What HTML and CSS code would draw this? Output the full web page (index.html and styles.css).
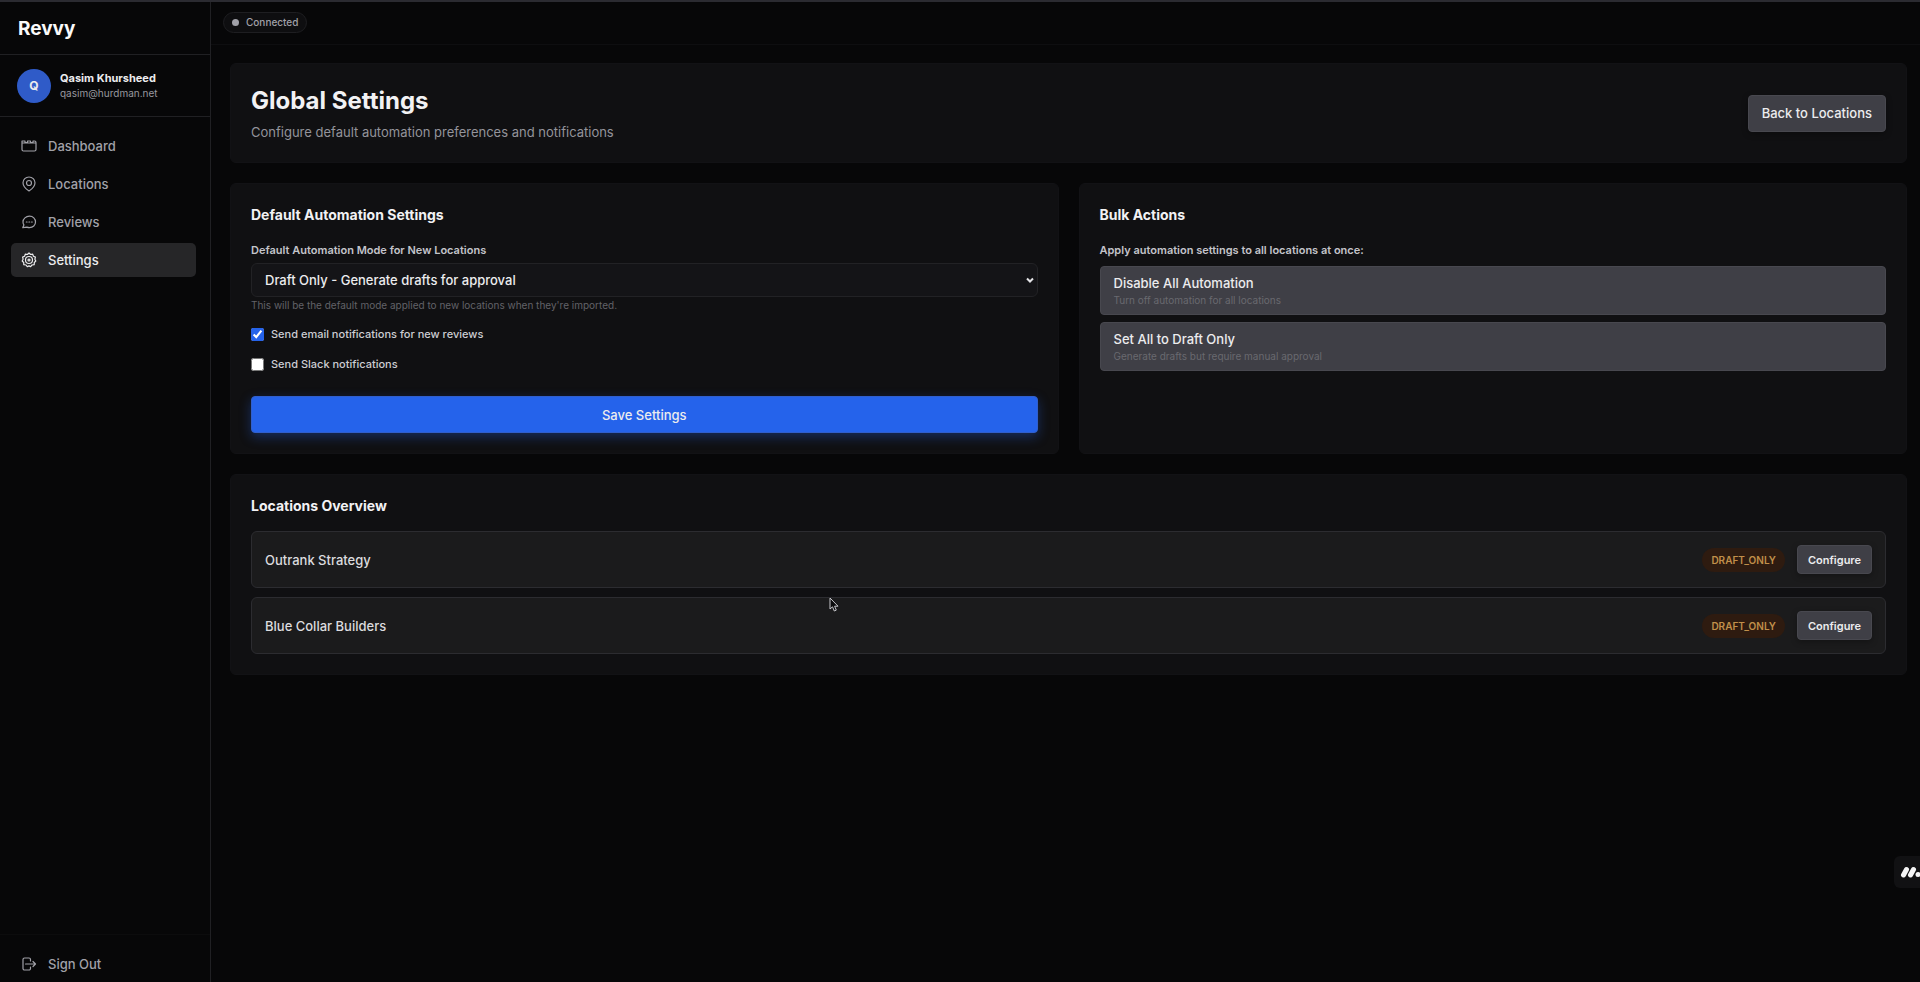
FILE: index.html
```html
<!DOCTYPE html>
<html lang="en">
<head>
<meta charset="utf-8">
<title>Revvy - Global Settings</title>
<link rel="stylesheet" href="styles.css">
</head>
<body>
<div class="app">
  <aside class="sidebar">
    <div class="brand">Revvy</div>
    <div class="user">
      <div class="avatar">Q</div>
      <div class="user-text">
        <div class="user-name">Qasim Khursheed</div>
        <div class="user-mail">qasim@hurdman.net</div>
      </div>
    </div>
    <nav class="nav">
      <a class="nav-item" href="#">
        <svg class="icon" viewBox="0 0 16 16"><path d="M1 3h3v1.500h2.500V3h3v1.500H12V3h1.500A1.500 1.500 0 0 1 15 4.500v7a1.500 1.500 0 0 1-1.500 1.500h-11A1.500 1.500 0 0 1 1 11.500zM1 5h14"/></svg>
        Dashboard</a>
      <a class="nav-item" href="#">
        <svg class="icon" viewBox="0 0 16 16"><path d="M8 15s-6-4-6-8.300a6 5.700 0 0 1 12 0C14 11 8 15 8 15z"/><circle cx="8" cy="7" r="2.500"/></svg>
        Locations</a>
      <a class="nav-item" href="#">
        <svg class="icon" viewBox="0 0 16 16"><path d="M8.500 2.200c3.500 0 6 2.500 6 5.700s-2.500 5.700-6 5.700c-1 0-1.900-.2-2.700-.5L1.800 13.600l1.100-2.700C2.300 10 2 9 2 7.900c0-3.200 2.900-5.700 6.500-5.700z"/><path d="M5.300 8h.8M7.900 8h.8M10.500 8h.8"/></svg>
        Reviews</a>
      <a class="nav-item active" href="#">
        <svg class="icon" viewBox="0 0 16 16"><path d="M8 1l1.600 1.500 2.100-.4.700 2.100 2 .9-.5 2.100.9 1.800-1.500 1.500-.1 2.200-2.200.3L9.600 14.700 8 13.900l-1.700.8L5 13l-2.200-.3-.1-2.200L1.200 9l.9-1.800-.5-2.100 2-.9.700-2.100 2.100.4z"/><circle cx="8" cy="8" r="3.500"/><circle cx="8" cy="8" r="1"/></svg>
        Settings</a>
    </nav>
    <div class="sidebar-foot">
      <button class="nav-item" type="button">
        <svg class="icon" viewBox="0 0 16 16"><path d="M9.500 5V3.500A1.500 1.500 0 0 0 8 2H3.500A1.500 1.500 0 0 0 2 3.500v9A1.500 1.500 0 0 0 3.500 14H8a1.500 1.500 0 0 0 1.500-1.500V11M4.500 8h10M12 5.500L14.500 8 12 10.500"/></svg>
        Sign Out</button>
    </div>
  </aside>
  <div class="content">
    <header class="topbar"><span class="status"><i class="dot"></i>Connected</span></header>
    <main class="main">
      <section class="card hero">
        <div>
          <h1 class="title">Global Settings</h1>
          <p class="subtitle">Configure default automation preferences and notifications</p>
        </div>
        <button class="btn" type="button">Back to Locations</button>
      </section>
      <div class="columns">
        <form class="card">
          <h2 class="heading">Default Automation Settings</h2>
          <label class="label" for="mode">Default Automation Mode for New Locations</label>
          <div class="select-wrap">
            <select class="select" id="mode"><option>Draft Only - Generate drafts for approval</option></select>
            <svg class="chevron" viewBox="0 0 8 6"><path d="M1 1.500l3 3 3-3"/></svg>
          </div>
          <p class="hint">This will be the default mode applied to new locations when they're imported.</p>
          <label class="check"><input type="checkbox" checked>Send email notifications for new reviews</label>
          <label class="check"><input type="checkbox">Send Slack notifications</label>
          <button class="btn primary" type="button">Save Settings</button>
        </form>
        <section class="card">
          <h2 class="heading">Bulk Actions</h2>
          <p class="label">Apply automation settings to all locations at once:</p>
          <div class="bulk-list">
            <button class="bulk" type="button"><span class="bulk-title">Disable All Automation</span><span class="bulk-sub">Turn off automation for all locations</span></button>
            <button class="bulk" type="button"><span class="bulk-title">Set All to Draft Only</span><span class="bulk-sub">Generate drafts but require manual approval</span></button>
          </div>
        </section>
      </div>
      <section class="card">
        <h2 class="heading">Locations Overview</h2>
        <div class="rows">
          <div class="row"><span class="row-name">Outrank Strategy</span><span class="badge">DRAFT_ONLY</span><button class="btn small" type="button">Configure</button></div>
          <div class="row"><span class="row-name">Blue Collar Builders</span><span class="badge">DRAFT_ONLY</span><button class="btn small" type="button">Configure</button></div>
        </div>
      </section>
    </main>
  </div>
</div>
<div class="widget"><svg class="widget-logo" viewBox="0 0 20 12"><path d="M3.500 9L6.500 3.500M10.500 9L13.500 3.500"/><circle cx="18" cy="8.500" r="2.500"/></svg></div>
<svg class="cursor" viewBox="0 0 10 15"><path d="M1 1v11l2.500-2.200L5.300 14l2-.9-1.700-3.900H9z"/></svg>
</body>
</html>
```
FILE: styles.css
```css
* { box-sizing: border-box; }
body {
  margin: 0;
  background: #070708;
  color: #ececee;
  font-family: Inter, "Liberation Sans", sans-serif;
  font-size: 13px;
  line-height: 20px;
}
h1, h2, p { margin: 0; }
button, select { font: inherit; color: inherit; }
.app {
  display: flex;
  min-height: 100vh;
  border-top: 2px solid #2b2b31;
}
.sidebar {
  display: flex;
  flex-direction: column;
  width: 211px;
  flex: none;
  border-right: 1px solid #202023;
}
.brand {
  padding: 13px 18px 11px;
  border-bottom: 1px solid #202023;
  font-size: 19px;
  font-weight: 700;
  line-height: 28px;
  color: #fafafa;
}
.user {
  display: flex;
  align-items: center;
  gap: 9px;
  height: 62px;
  padding: 0 17px;
  border-bottom: 1px solid #202023;
}
.avatar {
  width: 34px;
  height: 34px;
  border-radius: 50%;
  background: #2f5bc8;
  font-size: 12px;
  font-weight: 700;
  line-height: 34px;
  text-align: center;
}
.user-name { font-size: 11px; font-weight: 700; line-height: 15px; }
.user-mail { font-size: 10px; line-height: 14px; color: #98989f; }
.nav {
  display: flex;
  flex-direction: column;
  gap: 4px;
  flex: 1;
  padding: 12px 14px 12px 11px;
}
.nav-item {
  display: flex;
  align-items: center;
  gap: 11px;
  width: 100%;
  height: 34px;
  padding: 0 10px;
  border: 0;
  border-radius: 5px;
  background: none;
  color: #a1a1a8;
  font-weight: 500;
  text-decoration: none;
}
.active { background: #262628; color: #ececee; }
.icon {
  width: 16px;
  height: 16px;
  fill: none;
  stroke: currentColor;
  stroke-width: 1.2;
  stroke-linejoin: round;
  stroke-linecap: round;
}
.sidebar-foot {
  padding: 12px 14px 1px 11px;
  border-top: 1px solid #0c0c0d;
}
.content { flex: 1; min-width: 0; }
.topbar {
  display: flex;
  align-items: center;
  height: 43px;
  padding: 0 12px 2px;
  border-bottom: 1px solid #0e0e10;
}
.status {
  display: flex;
  align-items: center;
  gap: 7px;
  height: 21px;
  padding: 0 8px;
  border: 1px solid #1e1e21;
  border-radius: 11px;
  background: #0e0e10;
  font-size: 10px;
  font-weight: 500;
  color: #a1a1a8;
}
.dot { width: 7px; height: 7px; border-radius: 50%; background: #a1a1a8; }
.main {
  display: flex;
  flex-direction: column;
  gap: 20px;
  padding: 18px 13px 18px 19px;
}
.card {
  padding: 20px;
  border: 1px solid #121215;
  border-radius: 6px;
  background: #101012;
}
.hero {
  display: flex;
  align-items: center;
  justify-content: space-between;
}
.title { font-size: 24px; font-weight: 700; line-height: 34px; color: #f2f2f4; }
.subtitle { margin-top: 4px; color: #94949b; }
.btn {
  height: 37px;
  padding: 0 13px;
  border: 1px solid #48484f;
  border-radius: 4px;
  background: #3f3f46;
  box-shadow: 0 2px 6px #0000004d;
  font-weight: 500;
}
.columns {
  display: grid;
  grid-template-columns: 1fr 1fr;
  gap: 20px;
}
.heading { font-size: 14px; font-weight: 700; line-height: 22px; color: #f2f2f4; }
.label {
  display: block;
  margin: 16px 0 5px;
  font-size: 11px;
  font-weight: 600;
  line-height: 16px;
  color: #c4c4ca;
}
.select-wrap { position: relative; }
.select {
  display: block;
  width: 100%;
  height: 34px;
  padding: 0 13px;
  border: 1px solid #222225;
  border-radius: 6px;
  background: #141417;
  font-weight: 500;
  appearance: none;
}
.chevron {
  position: absolute;
  top: 14px;
  right: 4px;
  width: 8px;
  height: 6px;
  fill: none;
  stroke: #e4e4e7;
  stroke-width: 2;
}
.hint { font-size: 10px; line-height: 16px; color: #626268; margin-bottom: 12px; }
.check {
  display: flex;
  align-items: center;
  gap: 7px;
  height: 18px;
  margin-bottom: 12px;
  font-size: 11px;
  font-weight: 500;
  color: #cdcdd2;
}
.check input { width: 13px; height: 13px; margin: 0; accent-color: #2563eb; }
.primary {
  display: block;
  width: 100%;
  margin-top: 23px;
  border-color: #315fcb;
  background: #2563eb;
  box-shadow: 0 4px 12px #2563eb59;
}
.bulk-list { display: grid; gap: 7px; margin-top: 8px; }
.bulk {
  height: 49px;
  padding: 0 13px;
  border: 1px solid #48484f;
  border-radius: 4px;
  background: #3f3f46;
  text-align: left;
}
.bulk-title { display: block; font-weight: 500; line-height: 19px; }
.bulk-sub { display: block; font-size: 10px; line-height: 14px; color: #69696f; }
.rows { display: grid; gap: 9px; margin-top: 14px; }
.row {
  display: flex;
  align-items: center;
  height: 57px;
  padding: 0 13px;
  border: 1px solid #2c2c30;
  border-radius: 6px;
  background: #1b1b1c;
}
.row-name { flex: 1; font-weight: 500; color: #dcdcdf; }
.badge {
  margin-right: 12px;
  padding: 0 9px;
  border-radius: 12px;
  background: #2e1b10;
  color: #c08f4a;
  font-size: 10px;
  font-weight: 600;
  line-height: 24px;
}
.small { height: 29px; padding: 0 10px; font-size: 11px; font-weight: 600; }
.widget {
  position: fixed;
  top: 856px;
  right: 0;
  padding: 10px 0 10px 6px;
  border-radius: 6px 0 0 6px;
  background: #111113;
}
.widget-logo {
  display: block;
  width: 20px;
  height: 12px;
  fill: #f4f4f5;
  stroke: #f4f4f5;
  stroke-width: 5;
  stroke-linecap: round;
}
.widget-logo circle { stroke: none; }
.cursor {
  position: absolute;
  left: 829px;
  top: 597px;
  width: 10px;
  height: 15px;
  fill: #0b0b0c;
  stroke: #c8c8cc;
}
```
